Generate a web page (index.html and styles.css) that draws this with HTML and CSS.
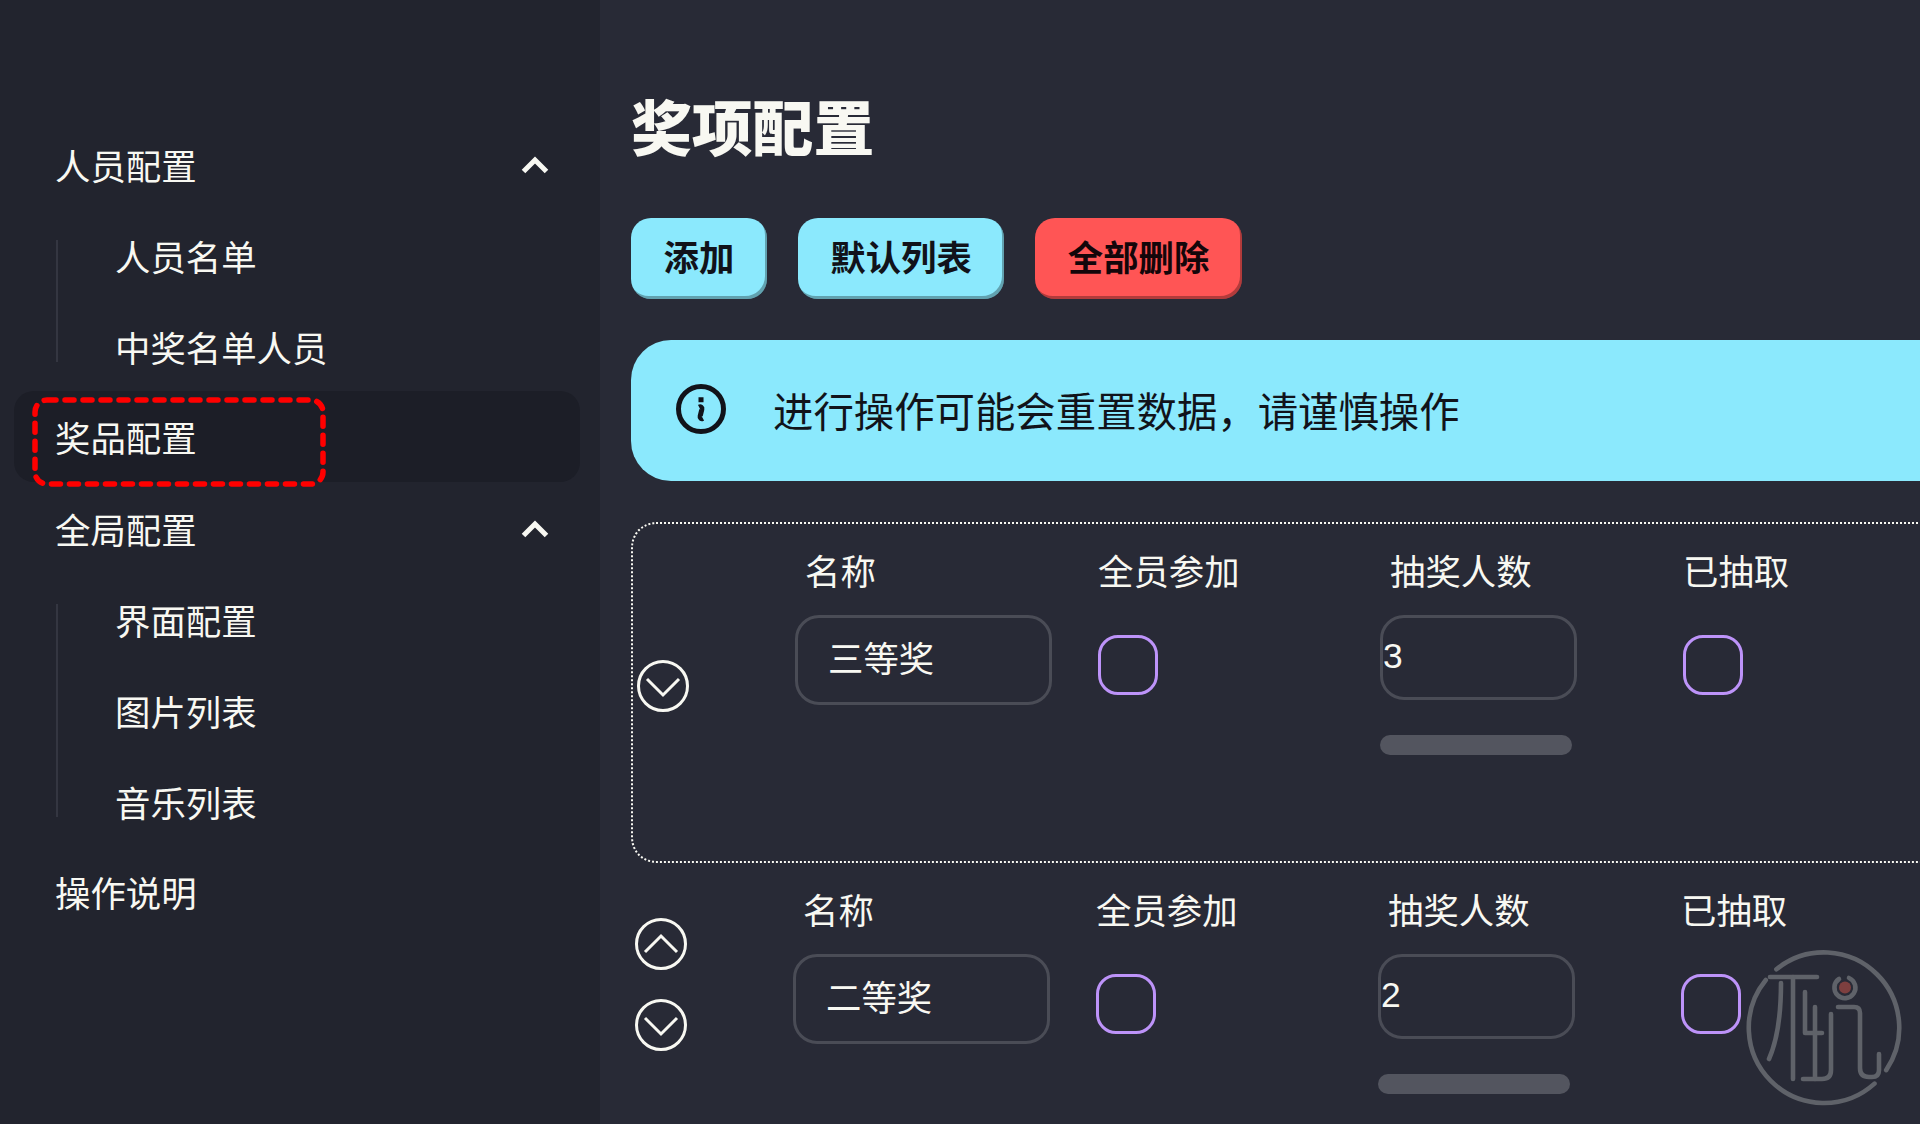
FILE: index.html
```html
<!DOCTYPE html>
<html lang="zh-CN">
<head>
    <meta charset="UTF-8">
    <meta name="viewport" content="width=device-width, initial-scale=1.0">
    <title>奖项配置</title>
    <link rel="stylesheet" href="styles.css">
</head>
<body>
    <aside class="sidebar">
        <ul class="menu">
            <li class="menu-row">
                <span>人员配置</span>
                <svg class="chevron" viewBox="0 0 28 18"><path d="M2.500 15.500 14 4l11.500 11.500"/></svg>
            </li>
            <ul class="submenu">
                <li>人员名单</li>
                <li>中奖名单人员</li>
            </ul>
            <li class="menu-row active">
                <span>奖品配置</span>
                <svg class="focus-ring" viewBox="0 0 294 90"><rect x="3" y="3" width="288" height="84" rx="12"/></svg>
            </li>
            <li class="menu-row">
                <span>全局配置</span>
                <svg class="chevron" viewBox="0 0 28 18"><path d="M2.500 15.500 14 4l11.500 11.500"/></svg>
            </li>
            <ul class="submenu">
                <li>界面配置</li>
                <li>图片列表</li>
                <li>音乐列表</li>
            </ul>
            <li class="menu-row">
                <span>操作说明</span>
            </li>
        </ul>
    </aside>

    <main class="content">
        <h1 class="page-title">奖项配置</h1>

        <div class="actions">
            <button class="btn">添加</button>
            <button class="btn">默认列表</button>
            <button class="btn btn-danger">全部删除</button>
        </div>

        <div class="alert">
            <svg class="alert-icon" viewBox="0 0 24 24"><path d="M11.25 11.25l.041-.02a.75.75 0 011.063.852l-.708 2.836a.75.75 0 001.063.853l.041-.021M21 12a9 9 0 11-18 0 9 9 0 0118 0zm-9-3.75h.008v.008H12V8.25z"/></svg>
            <span>进行操作可能会重置数据，请谨慎操作</span>
        </div>

        <section class="prize-row selected">
            <div class="move-btns">
                <svg class="move-icon hidden" viewBox="0 0 52 52"><circle cx="26" cy="26" r="24.500"/><path d="M10 34l16-16 16 16"/></svg>
                <svg class="move-icon" viewBox="0 0 52 52"><circle cx="26" cy="26" r="24.500"/><path d="M10 19l16 16 16-16"/></svg>
            </div>
            <div class="cell name-cell">
                <label class="cell-label">名称</label>
                <input class="text-input" type="text" value="三等奖">
            </div>
            <div class="cell">
                <label class="cell-label">全员参加</label>
                <input class="check" type="checkbox">
            </div>
            <div class="cell count-cell">
                <label class="cell-label">抽奖人数</label>
                <input class="number-input" type="text" value="3">
                <div class="range-bar"></div>
            </div>
            <div class="cell">
                <label class="cell-label">已抽取</label>
                <input class="check" type="checkbox">
            </div>
        </section>

        <section class="prize-row">
            <div class="move-btns">
                <svg class="move-icon" viewBox="0 0 52 52"><circle cx="26" cy="26" r="24.500"/><path d="M10 34l16-16 16 16"/></svg>
                <svg class="move-icon" viewBox="0 0 52 52"><circle cx="26" cy="26" r="24.500"/><path d="M10 19l16 16 16-16"/></svg>
            </div>
            <div class="cell name-cell">
                <label class="cell-label">名称</label>
                <input class="text-input" type="text" value="二等奖">
            </div>
            <div class="cell">
                <label class="cell-label">全员参加</label>
                <input class="check" type="checkbox">
            </div>
            <div class="cell count-cell">
                <label class="cell-label">抽奖人数</label>
                <input class="number-input" type="text" value="2">
                <div class="range-bar"></div>
            </div>
            <div class="cell">
                <label class="cell-label">已抽取</label>
                <input class="check" type="checkbox">
            </div>
        </section>
    </main>

    <svg class="watermark" viewBox="0 0 280 204">
        <path d="M136.400 49.300A75.300 75.300 0 0 1 237.200 54.500A75.300 75.300 0 0 1 246.200 150.100"/>
        <path d="M234.500 163.600A75.300 75.300 0 0 1 130.800 160.900A75.300 75.300 0 0 1 125.800 60"/>
        <path d="M130 57H177"/>
        <path d="M141 63Q141 112 129 139"/>
        <path d="M153 57V159"/>
        <path d="M165 72V113H182"/>
        <path d="M175 87V159"/>
        <path d="M191 94V150Q191 159 182 159H163"/>
        <path d="M198 87H214Q220 87 220 93V148Q220 157 229 157H232Q239 157 239 150V134"/>
        <path d="M199 59A10.500 10.500 0 1 0 209 58"/>
        <circle class="watermark-dot" cx="205" cy="67.500" r="6"/>
    </svg>
</body>
</html>
```

FILE: styles.css
```css
:root {
    --base-100: #282a36;
    --base-200: #22242e;
    --base-300: #1c1e27;
    --text: #f8f8f2;
    --primary: #8be9fd;
    --danger: #ff5555;
    --purple: #bd93f9;
    --line: #4a4c56;
}

* {
    margin: 0;
    padding: 0;
    box-sizing: border-box;
    font-family: "Noto Sans CJK SC", "Noto Sans", sans-serif;
}

html, body {
    height: 100%;
    overflow: hidden;
}

body {
    display: flex;
    position: relative;
    background: var(--base-100);
    color: var(--text);
    font-size: 35.400px;
}

/* sidebar */
.sidebar {
    flex: 0 0 600px;
    height: 100%;
    padding: 119px 20px 0 14px;
    background: var(--base-200);
}

.menu {
    list-style: none;
}

.menu-row {
    display: flex;
    justify-content: space-between;
    align-items: center;
    position: relative;
    height: 91px;
    padding: 0 31px 0 41px;
    border-radius: 20px;
}

.menu-row.active {
    margin: 1px 0;
    background: var(--base-300);
}

.chevron {
    width: 28px;
    height: 18px;
    fill: none;
    stroke: var(--text);
    stroke-width: 5;
}

.focus-ring {
    position: absolute;
    left: 18px;
    top: 6px;
    width: 294px;
    height: 90px;
    fill: none;
    stroke: #ff0000;
    stroke-width: 5.500;
    stroke-linecap: round;
    stroke-dasharray: 9 9;
}

.submenu {
    display: flex;
    flex-direction: column;
    gap: 60px;
    list-style: none;
    margin: 30px 0 29px 42px;
    padding-left: 57px;
    border-left: 2px solid #343641;
    line-height: 31px;
}

/* main */
.content {
    flex: 1;
    min-width: 0;
    padding: 95px 0 0 31px;
    overflow: hidden;
}

.page-title {
    font-size: 60.800px;
    font-weight: 900;
    line-height: 60px;
    margin-bottom: 63px;
}

.actions {
    display: flex;
    gap: 31px;
    margin-bottom: 41px;
}

.btn {
    height: 81px;
    padding: 0 32.500px 7px;
    border: none;
    border-radius: 20px;
    background: var(--primary);
    color: #11131a;
    font-size: 35.400px;
    font-weight: 700;
    box-shadow: inset -2px -3px 0 rgba(0, 0, 0, 0.3);
}

.btn-danger {
    background: var(--danger);
    color: #14060a;
}

.alert {
    display: flex;
    align-items: center;
    gap: 42px;
    width: 1400px;
    height: 141px;
    padding: 0 0 3px 40px;
    margin-bottom: 41px;
    border-radius: 40px;
    background: var(--primary);
    color: #11131a;
    font-size: 40.400px;
}

.alert-icon {
    flex: none;
    width: 60px;
    height: 60px;
    fill: none;
    stroke: #11131a;
    stroke-width: 2;
}

.prize-row {
    display: grid;
    grid-template-columns: 162px 303px 282px 303px 1fr;
    width: 1400px;
    height: 341px;
}

.prize-row.selected {
    border: 2px dotted var(--text);
    border-radius: 25px;
}

.move-btns {
    display: flex;
    flex-direction: column;
    gap: 29px;
    padding: 55px 0 0 4px;
}

.move-icon {
    width: 52px;
    height: 52px;
    fill: none;
    stroke: var(--text);
    stroke-width: 3;
}

.move-icon.hidden {
    visibility: hidden;
}

.cell {
    display: flex;
    flex-direction: column;
    align-items: flex-start;
    padding-top: 28px;
}

.cell-label {
    line-height: 35px;
    margin-bottom: 28px;
}

.name-cell .cell-label {
    margin-left: 10px;
}

.count-cell .cell-label {
    margin-left: 10px;
}

.text-input, .number-input {
    border: 3px solid var(--line);
    border-radius: 24px;
    background: transparent;
    color: var(--text);
    font-size: 35.400px;
    outline: none;
}

.text-input {
    width: 257px;
    height: 90px;
    padding: 0 0 8px 30px;
}

.number-input {
    width: 197px;
    height: 85px;
    padding: 0 0 2px;
    font-family: "Liberation Sans", sans-serif;
}

.check {
    appearance: none;
    width: 60px;
    height: 60px;
    margin-top: 20px;
    border: 3px solid var(--purple);
    border-radius: 20px;
    background: transparent;
}

.range-bar {
    width: 192px;
    height: 20px;
    margin-top: 35px;
    border-radius: 10px;
    background: #53555f;
}

/* logo in the corner */
.watermark {
    position: absolute;
    right: 0;
    bottom: 0;
    width: 280px;
    height: 204px;
    fill: none;
    stroke: #5f6269;
    stroke-width: 4.600;
    stroke-linecap: round;
    stroke-linejoin: round;
}

.watermark-dot {
    fill: #7d3f3f;
    stroke: none;
}
```
